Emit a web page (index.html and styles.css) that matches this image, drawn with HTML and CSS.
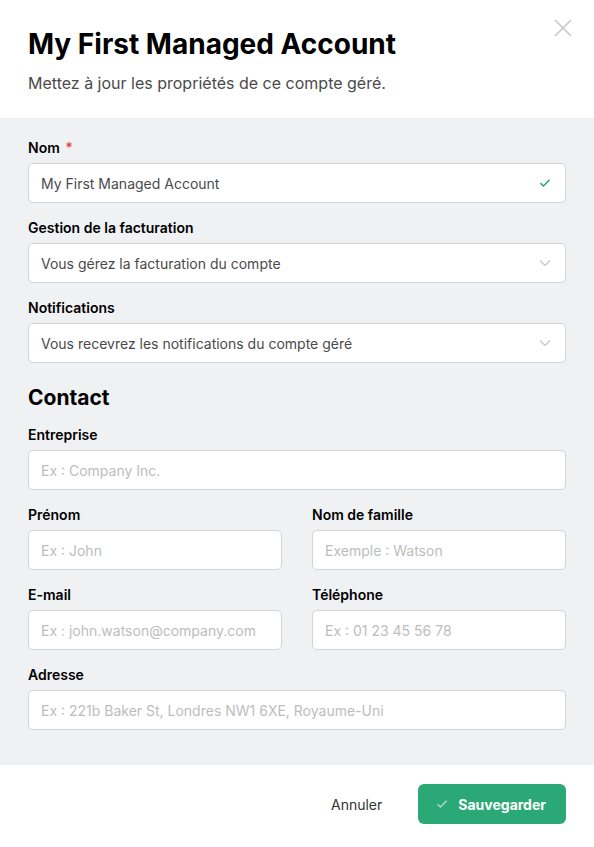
FILE: index.html
```html
<!DOCTYPE html>
<html lang="fr">
<head>
    <meta charset="UTF-8">
    <meta name="viewport" content="width=device-width, initial-scale=1.0">
    <title>My First Managed Account</title>
    <link rel="stylesheet" href="styles.css">
</head>
<body>
    <div class="modal">
        <header class="modal-header">
            <h1>My First Managed Account</h1>
            <p>Mettez à jour les propriétés de ce compte géré.</p>
            <button type="button" class="close-button" aria-label="Fermer">
                <svg width="18" height="18" viewBox="0 0 18 18"><path d="M1 1L17 17M17 1L1 17" stroke="#c8c8c8" stroke-width="1.6" fill="none"/></svg>
            </button>
        </header>

        <form class="modal-body" id="account-form">
            <div class="form-group">
                <label for="name">Nom <span class="required">*</span></label>
                <div class="field">
                    <input type="text" id="name" value="My First Managed Account">
                    <svg class="field-icon" width="12" height="10" viewBox="0 0 12 10"><path d="M1.5 5.2L4.5 8L10.5 1.8" stroke="#2aa876" stroke-width="1.6" fill="none"/></svg>
                </div>
            </div>
            <div class="form-group">
                <label for="billing">Gestion de la facturation</label>
                <div class="field">
                    <select id="billing">
                        <option>Vous gérez la facturation du compte</option>
                    </select>
                    <svg class="field-icon" width="12" height="8" viewBox="0 0 12 8"><path d="M1 1.5L6 6.5L11 1.5" stroke="#c4c4c4" stroke-width="1.2" fill="none"/></svg>
                </div>
            </div>
            <div class="form-group">
                <label for="notifications">Notifications</label>
                <div class="field">
                    <select id="notifications">
                        <option>Vous recevrez les notifications du compte géré</option>
                    </select>
                    <svg class="field-icon" width="12" height="8" viewBox="0 0 12 8"><path d="M1 1.5L6 6.5L11 1.5" stroke="#c4c4c4" stroke-width="1.2" fill="none"/></svg>
                </div>
            </div>

            <h2>Contact</h2>

            <div class="form-group">
                <label for="company">Entreprise</label>
                <input type="text" id="company" placeholder="Ex : Company Inc.">
            </div>
            <div class="form-row">
                <div class="form-group">
                    <label for="firstname">Prénom</label>
                    <input type="text" id="firstname" placeholder="Ex : John">
                </div>
                <div class="form-group">
                    <label for="lastname">Nom de famille</label>
                    <input type="text" id="lastname" placeholder="Exemple : Watson">
                </div>
            </div>
            <div class="form-row">
                <div class="form-group">
                    <label for="email">E-mail</label>
                    <input type="email" id="email" placeholder="Ex : john.watson@company.com">
                </div>
                <div class="form-group">
                    <label for="phone">Téléphone</label>
                    <input type="tel" id="phone" placeholder="Ex : 01 23 45 56 78">
                </div>
            </div>
            <div class="form-group">
                <label for="address">Adresse</label>
                <input type="text" id="address" placeholder="Ex : 221b Baker St, Londres NW1 6XE, Royaume-Uni">
            </div>
        </form>

        <footer class="modal-footer">
            <button type="button" class="cancel-button">Annuler</button>
            <button type="submit" form="account-form" class="save-button">
                <svg width="12" height="10" viewBox="0 0 12 10"><path d="M1.5 5.2L4.5 8L10.5 1.8" stroke="#a8dcc6" stroke-width="1.5" fill="none"/></svg>
                Sauvegarder
            </button>
        </footer>
    </div>
</body>
</html>
```

FILE: styles.css
```css
body {
    font-family: Inter, "Noto Sans", sans-serif;
    margin: 0;
    padding: 0;
    background-color: #fff;
    color: #111;
}

.modal {
    width: 594px;
    min-height: 847px;
    display: flex;
    flex-direction: column;
}

.modal-header {
    position: relative;
    padding: 26px 28px 24px;
}

.modal-header h1 {
    margin: 0;
    font-size: 28px;
    line-height: 36px;
    font-weight: 700;
    color: #000;
}

.modal-header p {
    margin: 10px 0 0;
    font-size: 16px;
    line-height: 22px;
    color: #4a4a4a;
}

.close-button {
    position: absolute;
    top: 19px;
    right: 22px;
    padding: 0;
    border: none;
    background: none;
    cursor: pointer;
}

.modal-body {
    background-color: #f0f1f3;
    padding: 20px 28px 35px;
    display: flex;
    flex-direction: column;
    gap: 15px;
}

.modal-body h2 {
    margin: 8px 0 0;
    font-size: 21px;
    line-height: 24px;
    font-weight: 700;
    color: #000;
}

.form-row {
    display: grid;
    grid-template-columns: 1fr 1fr;
    gap: 30px;
}

.form-group {
    display: flex;
    flex-direction: column;
    gap: 5px;
}

.form-group label {
    font-size: 14px;
    line-height: 20px;
    font-weight: 600;
    color: #000;
}

.required {
    color: #e5484d;
    margin-left: 2px;
}

.field {
    position: relative;
}

.form-group input, .form-group select {
    width: 100%;
    height: 40px;
    padding: 0 12px;
    border: 1px solid #d4d4d4;
    border-radius: 5px;
    background-color: #fff;
    box-sizing: border-box;
    font-family: inherit;
    font-size: 14px;
    color: #4a4a4a;
    appearance: none;
    outline: none;
}

.form-group input::placeholder {
    color: #bdbdbd;
}

.field-icon {
    position: absolute;
    right: 15px;
    top: 50%;
    transform: translateY(-50%);
}

.modal-footer {
    flex: 1;
    display: flex;
    justify-content: flex-end;
    align-items: flex-start;
    gap: 36px;
    padding: 19px 28px 20px;
}

.modal-footer button {
    height: 40px;
    border: none;
    font-family: inherit;
    font-size: 14px;
    cursor: pointer;
}

.cancel-button {
    background: none;
    color: #333;
    padding: 0;
}

.save-button {
    display: flex;
    align-items: center;
    gap: 10px;
    padding: 0 20px 0 18px;
    background-color: #2aa876;
    color: #fff;
    font-weight: 700;
    border-radius: 6px;
}
```
